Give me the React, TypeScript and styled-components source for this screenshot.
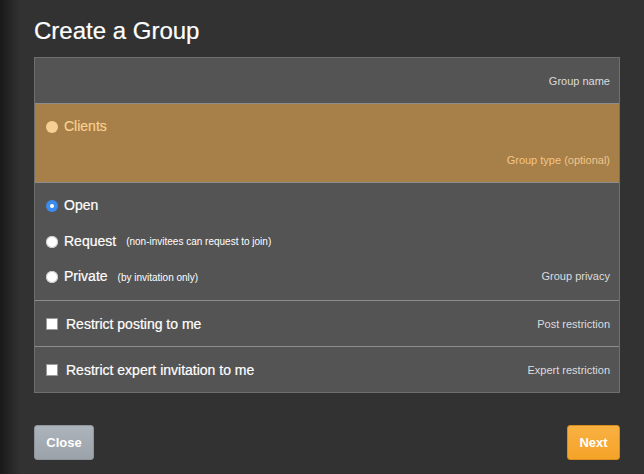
import React from 'react';
import styled, { createGlobalStyle } from 'styled-components';

const GlobalStyle = createGlobalStyle`
  html, body {
    margin: 0;
    padding: 0;
    background: #313131;
  }
  body {
    font-family: "Liberation Sans", Arial, Helvetica, sans-serif;
  }
`;

const Page = styled.div`
  width: 644px;
  height: 474px;
  box-sizing: border-box;
  padding: 16px 25px 0 34px;
  background:
    linear-gradient(90deg, rgba(0, 0, 0, 0.5) 0, rgba(0, 0, 0, 0) 20px),
    #323232;
  overflow: hidden;
`;

const Title = styled.h1`
  margin: 0;
  font-size: 24px;
  line-height: 30px;
  font-weight: normal;
  color: #fff;
  -webkit-text-stroke: 0.2px #fff;
`;

const Panel = styled.div`
  margin-top: 11px;
  width: 586px;
  box-sizing: border-box;
  border: 1px solid #6f6f6f;
  background: #545454;
`;

const Section = styled.div<{ $height?: number; $tone?: 'gold' }>`
  display: flex;
  justify-content: space-between;
  align-items: center;
  box-sizing: border-box;
  height: ${(p) => (p.$height ? `${p.$height}px` : 'auto')};
  padding: 0 9px 0 10px;
  background: ${(p) => (p.$tone === 'gold' ? '#a67f49' : 'transparent')};
  & + & {
    border-top: 1px solid #8c8c8c;
  }
`;

const TypeSection = styled(Section)`
  flex-direction: column;
  align-items: stretch;
  padding-top: 12px;
  padding-bottom: 12px;
`;

const PrivacySection = styled(Section)`
  align-items: flex-end;
  padding-top: 12px;
  padding-bottom: 14px;
`;

const Label = styled.span<{ $tone?: 'gold' }>`
  margin-left: auto;
  font-size: 11px;
  line-height: 20px;
  color: ${(p) => (p.$tone === 'gold' ? '#f2c689' : '#dcdcdc')};
`;

const Options = styled.div`
  display: flex;
  flex-direction: column;
  gap: 15.5px;
`;

const Option = styled.div`
  display: flex;
  align-items: center;
  height: 20px;
`;

const Radio = styled.span<{ $state: 'on' | 'off' | 'faded' }>`
  position: relative;
  width: 12px;
  height: 12px;
  border-radius: 50%;
  margin: 2px 6px 0 1px;
  flex-shrink: 0;
  background: ${(p) =>
    p.$state === 'on' ? '#3b8cf0' : p.$state === 'faded' ? '#f6cf95' : '#fff'};
  box-shadow: ${(p) =>
    p.$state === 'off' ? 'inset 0 0 0 1px #c8c8c8' : 'none'};
  &::after {
    content: '';
    display: ${(p) => (p.$state === 'on' ? 'block' : 'none')};
    position: absolute;
    left: 4px;
    top: 4px;
    width: 4px;
    height: 4px;
    border-radius: 50%;
    background: #fff;
  }
`;

const Check = styled.span`
  width: 10px;
  height: 10px;
  margin: 1px 8px 0 1px;
  flex-shrink: 0;
  background: #fff;
  border: 1px solid #9a9a9a;
`;

const OptionText = styled.span<{ $tone?: 'gold' }>`
  font-size: 14px;
  line-height: 20px;
  color: ${(p) => (p.$tone === 'gold' ? '#fbd08f' : '#fff')};
  -webkit-text-stroke: 0.2px currentColor;
`;

const Hint = styled.span`
  margin-left: 10px;
  font-size: 10px;
  color: #fff;
  padding-top: 2px;
`;

const Buttons = styled.div`
  display: flex;
  justify-content: space-between;
  width: 586px;
  margin-top: 32px;
`;

const Button = styled.button<{ $kind: 'close' | 'next' }>`
  height: 35px;
  width: ${(p) => (p.$kind === 'close' ? '60px' : '53px')};
  padding: 0;
  border-radius: 3px;
  font-family: inherit;
  font-size: 13px;
  font-weight: bold;
  color: #fff;
  cursor: pointer;
  border: 1px solid ${(p) => (p.$kind === 'close' ? '#8e959c' : '#d98d1e')};
  background: ${(p) =>
    p.$kind === 'close'
      ? 'linear-gradient(#acb3ba, #9ba2a9)'
      : 'linear-gradient(#f8b142, #f5a328)'};
`;

const privacy = [
  { name: 'Open', state: 'on' as const },
  { name: 'Request', state: 'off' as const, hint: '(non-invitees can request to join)' },
  { name: 'Private', state: 'off' as const, hint: '(by invitation only)' },
];

const App: React.FC = () => {
  return (
    <Page>
      <GlobalStyle />
      <Title>Create a Group</Title>
      <Panel>
        <Section $height={45}>
          <Label>Group name</Label>
        </Section>

        <TypeSection $height={79} $tone='gold'>
          <Option>
            <Radio $state='faded' />
            <OptionText $tone='gold'>Clients</OptionText>
          </Option>
          <Label $tone='gold'>Group type (optional)</Label>
        </TypeSection>

        <PrivacySection $height={118}>
          <Options>
            {privacy.map((item) => (
              <Option key={item.name}>
                <Radio $state={item.state} />
                <OptionText>{item.name}</OptionText>
                {item.hint && <Hint>{item.hint}</Hint>}
              </Option>
            ))}
          </Options>
          <Label>Group privacy</Label>
        </PrivacySection>

        <Section $height={46}>
          <Option>
            <Check />
            <OptionText>Restrict posting to me</OptionText>
          </Option>
          <Label>Post restriction</Label>
        </Section>

        <Section $height={46}>
          <Option>
            <Check />
            <OptionText>Restrict expert invitation to me</OptionText>
          </Option>
          <Label>Expert restriction</Label>
        </Section>
      </Panel>
      <Buttons>
        <Button $kind='close'>Close</Button>
        <Button $kind='next'>Next</Button>
      </Buttons>
    </Page>
  );
};

export default App;
